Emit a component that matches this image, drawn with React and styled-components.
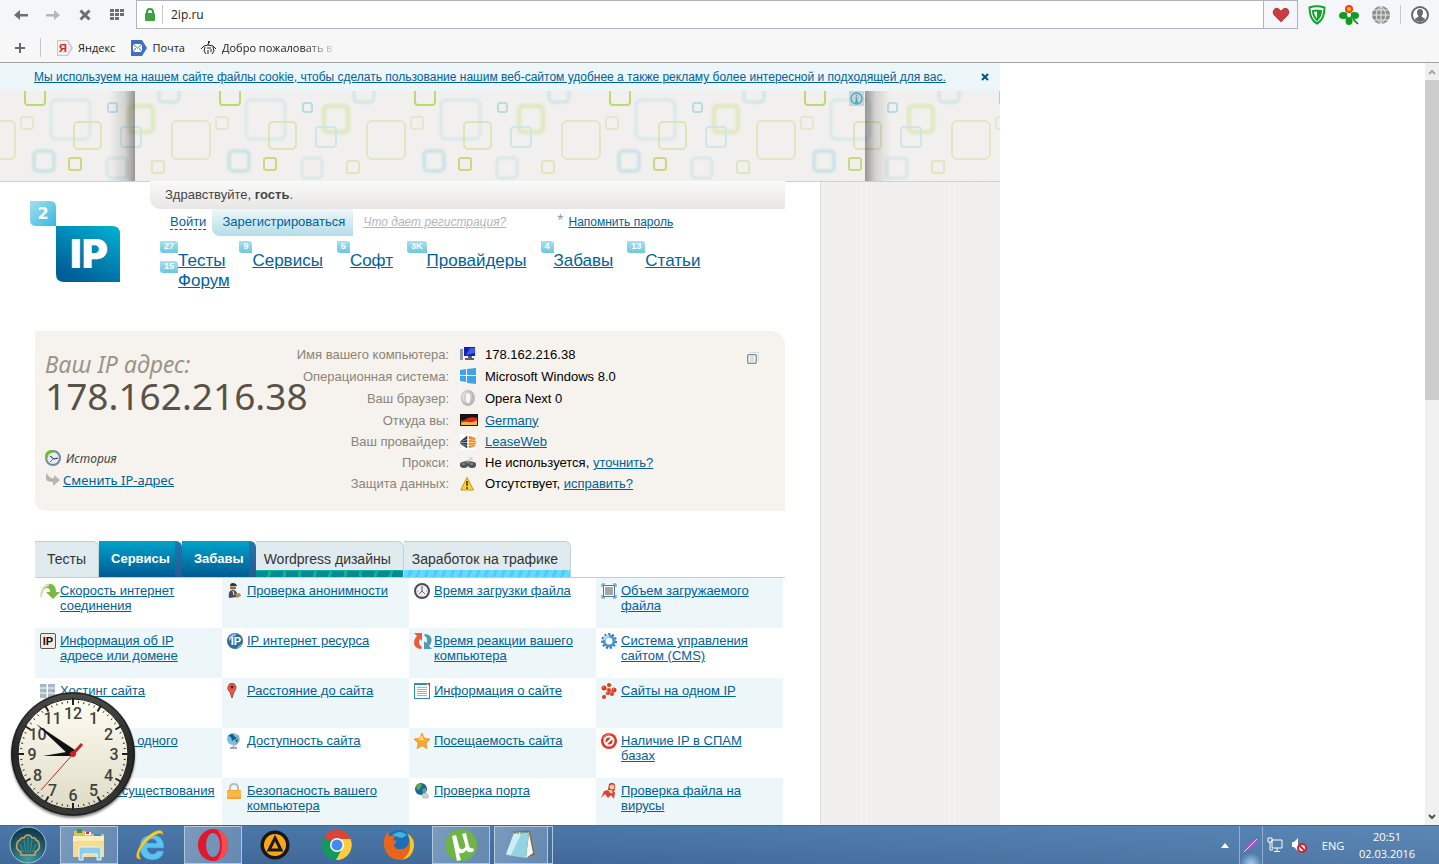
import React from "react";
import styled, { createGlobalStyle, css } from "styled-components";

const Global = createGlobalStyle`
  *, *::before, *::after { box-sizing: border-box; }
  body { margin: 0; font-family: "Liberation Sans", Arial, sans-serif; font-size: 13px; color: #000; background: #fff; }
  button, input { font: inherit; color: inherit; border: 0; padding: 0; margin: 0; background: none; }
  svg { display: block; flex: none; }
`;

const uiFont = `"Open Sans", "Noto Sans", sans-serif`;
const humanist = `"Noto Sans", "Open Sans", sans-serif`;

/* ---------- window ---------- */
const Window = styled.div`
  display: flex;
  flex-direction: column;
  height: 100vh;
  overflow: hidden;
`;
const Toolbar = styled.div`
  display: flex;
  height: 33px;
  align-items: flex-start;
  background: #f4f6f9;
  font-family: ${uiFont};
`;
const ToolGroup = styled.div`
  display: flex;
  align-items: center;
  height: 29px;
  gap: ${(p) => p.$gap || 16}px;
  padding: 0 ${(p) => p.$right || 0}px 0 ${(p) => p.$left || 0}px;
`;
const IconButton = styled.button`
  display: flex;
  align-items: center;
  justify-content: center;
  width: 16px;
  height: 20px;
`;
const AddressBox = styled.div`
  display: flex;
  flex: 1;
  align-items: center;
  height: 29px;
  background: #fff;
  border: 1px solid #b0b3b7;
  padding-left: 7px;
`;
const Rule = styled.span`
  width: 1px;
  height: 19px;
  background: #c6c8ca;
`;
const AddressInput = styled.input`
  flex: 1;
  min-width: 0;
  padding: 0 8px;
  font-size: 12px;
  color: #222;
  outline: none;
`;
const HeartButton = styled.button`
  display: flex;
  align-items: center;
  justify-content: center;
  width: 34px;
  height: 27px;
  border-left: 1px solid #b0b3b7;
  background: #f4f6f9;
`;
const Bookmarks = styled.nav`
  display: flex;
  align-items: center;
  height: 30px;
  padding-left: 12px;
  gap: 16px;
  background: #f7f7f7;
  border-bottom: 1px solid #a2a2a2;
  font-family: ${uiFont};
  font-size: 11px;
`;
const Bookmark = styled.a`
  display: flex;
  align-items: center;
  gap: 5px;
  color: #222;
  text-decoration: none;
  white-space: nowrap;
`;
const Faded = styled.span`
  width: 116px;
  overflow: hidden;
  mask-image: linear-gradient(90deg, #000 70%, transparent);
`;

/* ---------- viewport ---------- */
const Viewport = styled.div`
  position: relative;
  display: flex;
  flex: 1;
  min-height: 0;
  background: #fff;
`;
const Scroller = styled.div`
  flex: 1;
  min-width: 0;
  overflow: hidden;
`;
const ScrollTrack = styled.div`
  display: flex;
  flex-direction: column;
  align-items: center;
  width: 14px;
  background: #f0f0f0;
`;
const ScrollArrow = styled.button`
  display: flex;
  align-items: center;
  justify-content: center;
  width: 14px;
  height: 17px;
`;
const ScrollThumb = styled.div`
  width: 14px;
  height: 42%;
  background: #cdcdcd;
`;
const ScrollRest = styled.div`
  flex: 1;
`;
const Site = styled.div`
  width: 100%;
  max-width: 1000px;
`;
const link = css`
  color: #00629b;
  text-decoration: underline;
`;
const Link = styled.a`
  ${link}
`;
const CookieBar = styled.div`
  display: flex;
  align-items: center;
  justify-content: space-between;
  height: 28px;
  padding: 0 7px 0 34px;
  background: #ecf6f8;
  font-size: 12px;
`;
const Banner = styled.div`
  display: flex;
  height: 91px;
  position: relative;
  background: #f2f0ee;
  border-bottom: 1px solid #d0d0d0;
`;
const BannerFrame = styled.div`
  position: absolute;
  top: 0;
  bottom: 0;
  left: 50%;
  width: 73%;
  transform: translateX(-50%);
  display: flex;
  justify-content: flex-end;
  &::before, &::after {
    content: "";
    position: absolute;
    top: 0;
    bottom: 0;
    width: 26px;
  }
  &::before { right: 100%; background: linear-gradient(270deg, rgba(0,0,0,.38), rgba(0,0,0,.12) 40%, transparent); }
  &::after { left: 100%; background: linear-gradient(90deg, rgba(0,0,0,.38), rgba(0,0,0,.12) 40%, transparent); }
`;
const AdInfo = styled.button`
  width: 15px;
  height: 15px;
  margin-right: 1px;
  background: #cfd2d2;
`;
const Columns = styled.div`
  display: flex;
`;
const Main = styled.main`
  flex: 1;
  padding: 0 35px;
`;
const Side = styled.aside`
  width: 180px;
  border-left: 1px solid #e0deda;
  background: repeating-linear-gradient(90deg, #f2f0ee 0 4px, #f0eeec 4px 5px, #f2f0ee 5px 9px, #f1efed 9px 11px);
`;

/* ---------- header ---------- */
const Header = styled.header`
  display: flex;
  height: 149px;
  margin-left: -5px;
`;
const Logo = styled.a`
  display: block;
  width: 90px;
  margin: 19px 30px 0 0;
`;
const HeaderBody = styled.div`
  flex: 1;
  min-width: 0;
`;
const Greeting = styled.div`
  height: 28px;
  margin-top: -1px;
  padding-left: 15px;
  line-height: 28px;
  position: relative;
  color: #444;
  border-bottom-left-radius: 10px;
  background: linear-gradient(#fafafa, #e7e6e5);
`;
const Account = styled.div`
  display: flex;
  height: 27px;
  align-items: center;
  padding: 0 0 2px 20px;
  font-size: 12px;
  white-space: nowrap;
`;
const LoginButton = styled.button`
  height: 17px;
  margin-right: 6px;
  font-size: 13px;
  color: #00629b;
  border-bottom: 1px dashed #00629b;
`;
const RegisterButton = styled.button`
  align-self: flex-start;
  height: 27px;
  padding: 0 8px 2px 10px;
  margin-right: 10px;
  font-size: 13px;
  color: #00629b;
  border-bottom-left-radius: 8px;
  background: linear-gradient(#edf7f8, #b4dde7);
`;
const Hint = styled.a`
  color: #b5b5b5;
  font-style: italic;
  margin-right: 51px;
`;
const Star = styled.sup`
  color: #999;
  font-size: 16px;
  line-height: 12px;
  padding-bottom: 2px;
  margin-right: 5px;
`;
const Menu = styled.nav`
  display: flex;
  flex-wrap: wrap;
  width: 570px;
  padding: 5px 0 0 10px;
  column-gap: 14px;
`;
const MenuItem = styled.div`
  display: flex;
  align-items: flex-start;
  height: 20px;
`;
const Count = styled.span`
  height: 12px;
  padding: 0 4px;
  font-size: 9px;
  font-weight: bold;
  line-height: 11px;
  color: #fff;
  border-radius: 0 3px 0 3px;
  background: linear-gradient(#a9e0ee, #6cc7e2);
`;
const MenuLink = styled.a`
  ${link}
  font-size: 17px;
  line-height: 20px;
  margin-top: 10px;
`;

/* ---------- address panel ---------- */
const IpPanel = styled.section`
  display: flex;
  height: 180px;
  background: #f6f3ee;
  border-radius: 0 14px 0 10px;
`;
const IpSummary = styled.div`
  width: 250px;
  padding: 20px 0 0 10px;
  font-family: ${humanist};
  white-space: nowrap;
`;
const IpTitle = styled.h1`
  margin: 0;
  font-size: 23px;
  line-height: 26px;
  font-style: italic;
  font-weight: 400;
  color: #9b9488;
`;
const IpValue = styled.p`
  margin: 0 0 32px;
  font-size: 37px;
  line-height: 38px;
  color: #5a5147;
`;
const IpAction = styled.div`
  display: flex;
  align-items: center;
  gap: ${(p) => p.$gap}px;
  height: 22px;
  font-size: ${(p) => p.$size}px;
  color: #444;
`;
const Facts = styled.table`
  align-self: flex-start;
  margin-top: 12px;
  border-collapse: collapse;
  th, td { padding: 0; white-space: nowrap; }
  th { width: 164px; text-align: right; font-weight: 400; color: #8b8378; }
  td svg { margin: 0 7px 0 11px; }
`;
const FactRow = styled.tr`
  height: ${(p) => (p.$compact ? 21 : 22)}px;
`;
const CopyButton = styled.button`
  width: 12px;
  height: 12px;
  margin: 21px 26px 0 auto;
`;

/* ---------- tabs and tools ---------- */
const Tabs = styled.div`
  display: flex;
  height: 37px;
  margin-top: 30px;
  border-bottom: 1px solid #bfcfd5;
`;
const Tab = styled.button`
  height: 36px;
  padding: 0 12px 2px ${(p) => (p.$strip ? 8 : 12)}px;
  font-size: 14px;
  white-space: nowrap;
  color: #333;
  border-top: 1px solid #bfcfd5;
  border-right: 1px solid #c3d1d6;
  border-top-right-radius: 6px;
  background: #e0ebef;
  ${(p) => p.$active && css`
    color: #fff;
    font-size: 13px;
    font-weight: bold;
    border-right: 0;
    border-top: 0;
    background: linear-gradient(90deg, transparent calc(100% - 7px), rgba(60,90,150,.6) calc(100% - 7px)), linear-gradient(#00a3cb, #005a92);
  `}
  ${(p) => p.$strip === "teal" && css`
    background: repeating-linear-gradient(100deg, #078a94 0 12px, #0fb09c 12px 15px) bottom / 100% 6px no-repeat, linear-gradient(#0fb09c, #0fb09c) bottom / 100% 7px no-repeat, #e0ebef;
  `}
  ${(p) => p.$strip === "sky" && css`
    background: repeating-linear-gradient(110deg, #5fdcff 0 5px, #58c6ff 5px 8px) bottom / 100% 7px no-repeat, #e0ebef;
  `}
`;
const Tools = styled.div`
  display: grid;
  grid-template-columns: repeat(4, 1fr);
  margin-right: 2px;
`;
const Tool = styled.div`
  display: flex;
  height: 50px;
  padding: 5px 6px 0 5px;
  line-height: 15px;
  background: ${(p) => (p.$tint ? "#edf6f8" : "#fff")};
`;
const ToolIcon = styled.span`
  flex: none;
  width: 20px;
`;
const ClockHolder = styled.div`
  position: absolute;
  left: 8px;
  bottom: 3px;
`;

/* ---------- taskbar ---------- */
const Taskbar = styled.footer`
  display: flex;
  height: 39px;
  justify-content: space-between;
  background: linear-gradient(90deg, rgba(255,255,255,0) 40%, rgba(150,190,225,.22)), linear-gradient(#4a78a8, #41699a);
  border-top: 1px solid #3e6893;
  font-family: ${uiFont};
  color: #fff;
`;
const Apps = styled.div`
  display: flex;
  align-items: stretch;
`;
const AppButton = styled.button`
  display: flex;
  align-items: center;
  justify-content: center;
  width: ${(p) => p.$w || 58}px;
  margin-right: 4px;
  border: 1px solid ${(p) => (p.$open ? "#b3c6da" : "transparent")};
  background: ${(p) => (p.$open ? "linear-gradient(110deg, #7a9bbd, #6588b0)" : "none")};
`;
const StackEdge = styled.span`
  width: 5px;
  margin-left: -4px;
  border: 1px solid #b3c6da;
  border-left: 0;
`;
const Tray = styled.div`
  display: flex;
  align-items: center;
  font-size: 11px;
`;
const TrayButton = styled.button`
  display: flex;
  align-items: center;
  justify-content: center;
  width: ${(p) => p.$w || 24}px;
  height: 38px;
`;
const FeatherButton = styled(TrayButton)`
  border-left: 1px solid #8fb0d0;
  border-right: 1px solid #8fb0d0;
  background: radial-gradient(circle at 50% 100%, #a8d0f2, transparent 28%);
`;
const DateTime = styled.time`
  width: 64px;
  margin-right: 20px;
  text-align: center;
  line-height: 17px;
`;

/* ---------- drawings ---------- */
const I = ({ w = 16, h = 16, vb, children }) => (
  <svg width={w} height={h} viewBox={vb || `0 0 ${w} ${h}`} fill="none" aria-hidden="true">{children}</svg>
);

const tiles = [
  [25, -6, 20, 20, 3, "#c1d86e", 2, 0],
  [51, 9, 39, 39, 5, "#d5e7ea", 3, 1],
  [74, 31, 27, 27, 4, "#dae5b8", 2, 0],
  [108, 12, 9, 9, 2, "#b9dce3", 2, 0],
  [129, 15, 24, 26, 4, "#e0e9c3", 5, 1],
  [121, 36, 20, 20, 3, "#d0e5e8", 2, 0],
  [159, -8, 20, 19, 4, "#cfe4e7", 3, 1],
  [172, 30, 38, 38, 5, "#dfe8c0", 2, 0],
  [-23, 30, 38, 38, 5, "#dfe8c0", 2, 0],
  [21, 26, 12, 12, 2, "#e2e9c8", 2, 0],
  [34, 60, 20, 20, 4, "#cde3e7", 4, 1],
  [69, 67, 12, 12, 2, "#c8da80", 2, 0],
  [107, 67, 20, 20, 4, "#d6e6e9", 3, 1],
  [152, 70, 12, 12, 2, "#dde7bb", 2, 0],
];
const Squares = () => (
  <svg width="100%" height="90" aria-hidden="true">
    <defs>
      <filter id="soft" x="-20%" y="-20%" width="140%" height="140%" colorInterpolationFilters="sRGB"><feGaussianBlur stdDeviation=".8" /></filter>
      <pattern id="squares" width="195" height="90" patternUnits="userSpaceOnUse">
        {tiles.map(([x, y, w, h, r, c, s, b], i) => (
          <rect key={i} x={x} y={y} width={w} height={h} rx={r} fill="none" stroke={c} strokeWidth={s} filter={b ? "url(#soft)" : undefined} />
        ))}
      </pattern>
    </defs>
    <rect width="100%" height="90" fill="url(#squares)" />
  </svg>
);

const LogoArt = () => (
  <svg width="90" height="81" viewBox="0 0 90 81" role="img" aria-label="2IP">
    <defs>
      <linearGradient id="lg1" x1="0" y1="0" x2="1" y2="1"><stop stopColor="#a4e0ee" /><stop offset="1" stopColor="#37b6de" /></linearGradient>
      <linearGradient id="lg2" x1="1" y1="0" x2=".4" y2="1"><stop stopColor="#00b2d4" /><stop offset="1" stopColor="#005f98" /></linearGradient>
    </defs>
    <path d="M0 0h20q6 0 6 6v19H6q-6 0-6-6z" fill="url(#lg1)" />
    <path d="M26 25h56q8 0 8 8v48H34q-8 0-8-8z" fill="url(#lg2)" />
    <text x="13" y="18" textAnchor="middle" fontFamily="DejaVu Sans" fontWeight="bold" fontSize="16" fill="#fff">2</text>
    <text x="59" y="67" textAnchor="middle" fontFamily="Inter, Liberation Sans, sans-serif" fontWeight="900" fontSize="40" fill="#fff">IP</text>
  </svg>
);

const Clock = () => {
  const nums = [[12, 0], [1, 30], [2, 60], [3, 90], [4, 120], [5, 150], [6, 180], [7, 210], [8, 240], [9, 270], [10, 300], [11, 330]];
  const pos = (deg, r) => [65 + r * Math.sin((deg * Math.PI) / 180), 64 - r * Math.cos((deg * Math.PI) / 180)];
  return (
    <svg width="130" height="132" viewBox="0 0 130 132" role="img" aria-label="20:51">
      <defs>
        <linearGradient id="face" x1="0" y1="0" x2="0" y2="1"><stop stopColor="#fffdf2" /><stop offset="1" stopColor="#dedbc6" /></linearGradient>
        <linearGradient id="ring" x1="0" y1="0" x2="0" y2="1"><stop stopColor="#4c4c4a" /><stop offset=".5" stopColor="#262625" /><stop offset="1" stopColor="#3a3a39" /></linearGradient>
        <filter id="shade" x="-10%" y="-10%" width="120%" height="120%"><feGaussianBlur stdDeviation="1" /></filter>
      </defs>
      <circle cx="65" cy="66" r="62" fill="#000" opacity=".45" filter="url(#shade)" />
      <circle cx="65" cy="64" r="62" fill="url(#ring)" />
      <circle cx="65" cy="64" r="61" stroke="#1a1a1a" strokeWidth="1" fill="none" />
      <circle cx="65" cy="64" r="55" fill="url(#face)" stroke="#1b1b1a" strokeWidth="1" />
      {Array.from({ length: 60 }, (_, i) => {
        const major = i % 5 === 0;
        const [x1, y1] = pos(i * 6, major ? 49 : 51);
        const [x2, y2] = pos(i * 6, major ? 56 : 53);
        return <line key={i} x1={x1} y1={y1} x2={x2} y2={y2} stroke="#222" strokeWidth={major ? 2 : 1} />;
      })}
      {nums.map(([n, d]) => {
        const [x, y] = pos(d, 41);
        return <text key={n} x={x} y={y + 6} textAnchor="middle" fontFamily="Roboto, Liberation Sans, sans-serif" fontWeight="500" fontSize="16" fill="#40403c">{n}</text>;
      })}
      <path d="M28 34L67 60l-5 6z" fill="#111" />
      <path d="M35 66l29-5 3 5z" fill="#111" />
      <path d="M33 100L74 54" stroke="#c2272d" strokeWidth="1" />
      <path d="M64 65L74 54" stroke="#c2272d" strokeWidth="3" />
      <circle cx="65" cy="64" r="3" fill="#c2272d" />
    </svg>
  );
};

const art = {
  speed: <I w={20}><path d="M1 15C0 5 6 0 11 1c4 1 5 4 5 8h4l-7 7-7-7h4c0-3-1-4-3-4-3 0-5 4-6 10z" fill="#7db843" /><path d="M1 14C1 6 5 2 9 2" stroke="#cfe8b4" strokeWidth="2" /></I>,
  spy: <I><circle cx="6" cy="4" r="3" fill="#e2b48e" /><path d="M3 3q0-3 3-3t4 3z" fill="#333" /><path d="M2 15c-1-6 1-8 4-8s5 3 4 7z" fill="#4a4f58" /><path d="M6 8l1 4" stroke="#fff" /><path d="M8 11l5-1 1 3-4 2z" fill="#b98d55" /><path d="M3 5h6" stroke="#222" /></I>,
  timer: <I><circle cx="8" cy="8" r="7" fill="#eef1f3" stroke="#4b4f53" strokeWidth="2" /><path d="M8 3v5" stroke="#555" /><path d="M5 11l3-3 3 3" stroke="#d33" /><path d="M3 8h1M12 8h1M8 13v1" stroke="#888" /></I>,
  volume: <I><path d="M1 4V1h3M12 1h3v3M15 12v3h-3M4 15H1v-3" stroke="#4f86ad" /><rect x="2.500" y="2.500" width="11" height="11" fill="#fff" stroke="#4679a2" /><rect x="4" y="4" width="8" height="8" fill="#a4a6a8" /></I>,
  ip: <I><rect x=".5" y=".5" width="15" height="15" rx="1.5" fill="#f8e9e1" stroke="#555" /><text x="8" y="12" textAnchor="middle" fontFamily="Liberation Sans" fontWeight="bold" fontSize="11" fill="#111">IP</text></I>,
  ipGlobe: <I><circle cx="8" cy="8" r="8" fill="#2f6f9c" /><path d="M2 4q4-4 8-3L6 4 2 8zM12 13l3-2q-2 4-5 4z" fill="#9cc7dc" /><text x="9" y="12" textAnchor="middle" fontFamily="Liberation Sans" fontWeight="bold" fontSize="11" fill="#fff">IP</text></I>,
  react: <I w={18}><path d="M0 0h8v8L6 6q-3 4 2 8l-1 2C-2 15-1 7 3 3z" fill="#ee5a3a" /><path d="M18 16h-8V8l2 2q3-4-2-8l1-1c9 1 7 9 4 12z" fill="#4f9bb8" /></I>,
  gear: <I><circle cx="8" cy="8" r="5" stroke="#4a94d8" strokeWidth="3" /><circle cx="8" cy="8" r="7" stroke="#2d79c4" strokeWidth="2" strokeDasharray="2 2" /><path d="M3 7q1-4 5-4" stroke="#c2e2fa" strokeWidth="2" /></I>,
  server: <I><path d="M0 1h7v14H0zM8 1h7v14H8z" fill="#a5b8c4" /><path d="M0 5h16M0 10h16M7 1v14" stroke="#fff" /><path d="M5 8h1M13 8h1" stroke="#3a9a44" /></I>,
  pin: <I w={10} h={16}><path d="M5 15L3 9Q0 7 1 4 2 0 5 0t4 4q0 3-2 5z" fill="#e8594e" stroke="#b5443c" /><circle cx="5" cy="4" r="1.5" fill="#6d1613" /></I>,
  doc: <I><rect x=".5" y=".5" width="15" height="15" fill="#fff" stroke="#2c8fb5" /><path d="M3 4.500h10M3 6.500h10M3 8.500h10M3 10.500h10M3 12.500h10" stroke="#b0b0b0" /><path d="M0 1h13" stroke="#2c8fb5" strokeWidth="2" /><path d="M14 0h2v2h-2z" fill="#e33" /></I>,
  sites: <I><path d="M3 14l3-4 3-1 5-2M3 5l5 2M7 3l4-1" stroke="#b98752" /><g fill="#dc3d22"><circle cx="3" cy="14" r="2" /><circle cx="7" cy="10" r="2" /><circle cx="3" cy="5" r="2.500" /><circle cx="8" cy="7" r="2" /><circle cx="13" cy="7" r="2.500" /><circle cx="8" cy="2" r="2" /><circle cx="11" cy="11" r="2" /></g><path d="M2 4h1M8 5h1M12 6h1M6 9h1" stroke="#ffb19a" /></I>,
  globeStand: <I w={13} h={16}><circle cx="6" cy="6" r="6" fill="#79c0e0" /><path d="M1 3q5-4 6 0l3 2-5 3-1-4zM8 7l3-1-1 4z" fill="#175f8b" /><path d="M11 2q4 8-5 11v1" stroke="#8c999f" /><path d="M3 15h7" stroke="#9ca6ab" strokeWidth="2" /></I>,
  star: <I><path d="M8 0l2.500 5.300 5.500.7-4 4 1 5.700-5-2.900-5 2.900 1-5.700-4-4 5.500-.7z" fill="#fba82c" stroke="#e17f18" strokeWidth=".6" /><path d="M8 2l2 5H4z" fill="#ffd873" /></I>,
  ban: <I><circle cx="8" cy="8" r="8" fill="#dd3425" /><circle cx="8" cy="8" r="4.500" stroke="#fff" strokeWidth="2" /><path d="M5 11l6-6" stroke="#fff" strokeWidth="2" /><path d="M2 6q2-5 8-5" stroke="#ff8f7c" /></I>,
  lock: <I w={14} h={16}><path d="M3 8V5q0-4 4-4t4 4v3" stroke="#b9bdc0" strokeWidth="2" /><rect x="0" y="7" width="14" height="9" rx="1" fill="#f6a42a" /><path d="M0 9h14M0 11h14M0 13h14" stroke="#ffc866" /></I>,
  globeMouse: <I><circle cx="7" cy="6" r="6" fill="#1c62a8" /><path d="M2 3q4-4 6-1l-2 4-3 1zM8 6l4-1v4l-3 1z" fill="#57ae45" /><path d="M8 12q1-3 4-2t2 5H9z" fill="#c6d5de" stroke="#8899a4" strokeWidth=".5" /></I>,
  virus: <I><path d="M0 15l3-7 4-1 3 2 4 0-1 7-3-4-3 3-3-4z" fill="#e1432f" /><path d="M8 1q4-3 6 1 1 4-2 8L7 7z" fill="#c63b29" /><circle cx="11" cy="4" r="2.500" fill="#f7c6a5" /><path d="M7 7l4 0 1 3-3 0z" fill="#f7c6a5" /></I>,
};

const Pc = () => <I><path d="M0 3h3v11H0z" fill="#8d99a5" /><path d="M4 1h12v9H4z" fill="#dde3e8" /><path d="M4 1h11v9H4z" fill="#1020b8" /><path d="M6 9l4-7h5v5z" fill="#3f5bea" /><path d="M8 10h4v2H8zM5 12h9v2H5z" fill="#59636d" /></I>;
const Win = () => <I><path d="M0 2l6-1v6H0zM7 1l9-1v7H7zM0 8h6v6l-6-1zM7 8h9v8l-9-1z" fill="#3fa3e8" /></I>;
const OperaGrey = () => <I><ellipse cx="8" cy="8" rx="7" ry="8" fill="#b9bbbb" /><ellipse cx="7" cy="7" rx="5" ry="6" fill="#dededd" /><ellipse cx="8" cy="8" rx="3" ry="6" fill="#f9f7f3" stroke="#999" strokeWidth=".6" /></I>;
const Flag = () => <I w={18} h={12}><path d="M0 0h18v12H0z" fill="#d52b1e" /><path d="M0 0h18v4Q10 2 6 5T0 5z" fill="#181212" /><path d="M0 9q4-2 8-1t10-2v6H0z" fill="#f2b632" /><path d="M.5.5h17v11H.5z" stroke="#111" /></I>;
const Lease = () => <I><path d="M0 0h16v16H0z" fill="#fff" /><path d="M7 2v3L1 7zM7 6v2H0zM7 9v2L0 9zM7 12v2l-6-4z" fill="#27344f" stroke="#27344f" strokeWidth=".5" /><path d="M9 2l6 2v2L9 5zM9 6l7 1v1H9zM9 9h7v1l-7 1zM9 12l6-1v1l-6 2z" fill="#f68b1f" stroke="#f68b1f" strokeWidth=".5" /></I>;
const Glasses = () => <I><path d="M0 8q8-5 16 0v3H0z" fill="#83898b" /><ellipse cx="4" cy="10" rx="4" ry="3" fill="#4c5557" /><ellipse cx="12" cy="10" rx="4" ry="3" fill="#4c5557" /><path d="M10 1l1 2 2-1-1 2 2 1H9" fill="#ccd2d3" /><path d="M2 9h3M10 9h3" stroke="#a7b2b5" /></I>;
const Warn = () => <I><path d="M7 1.500L13.500 14H.8z" fill="#ffd22e" stroke="#c69214" strokeLinejoin="round" /><path d="M7 5v5M7 11v2" stroke="#333" strokeWidth="1.500" /></I>;

const facts = [
  ["Имя вашего компьютера:", <Pc />, "178.162.216.38"],
  ["Операционная система:", <Win />, "Microsoft Windows 8.0"],
  ["Ваш браузер:", <OperaGrey />, "Opera Next 0"],
  ["Откуда вы:", <Flag />, <Link href="#geo">Germany</Link>],
  ["Ваш провайдер:", <Lease />, <Link href="#isp">LeaseWeb</Link>],
  ["Прокси:", <Glasses />, <>Не используется, <Link href="#proxy">уточнить?</Link></>],
  ["Защита данных:", <Warn />, <>Отсутствует, <Link href="#privacy">исправить?</Link></>],
];

const menu = [["27", "Тесты"], ["9", "Сервисы"], ["5", "Софт"], ["3K", "Провайдеры"], ["4", "Забавы"], ["13", "Статьи"], ["15", "Форум"]];

const tools = [
  ["speed", "Скорость интернет соединения"], ["spy", "Проверка анонимности"], ["timer", "Время загрузки файла"], ["volume", "Объем загружаемого файла"],
  ["ip", "Информация об IP адресе или домене"], ["ipGlobe", "IP интернет ресурса"], ["react", "Время реакции вашего компьютера"], ["gear", "Система управления сайтом (CMS)"],
  ["server", "Хостинг сайта"], ["pin", "Расстояние до сайта"], ["doc", "Информация о сайте"], ["sites", "Сайты на одном IP"],
  ["server", "Все домены одного владельца"], ["globeStand", "Доступность сайта"], ["star", "Посещаемость сайта"], ["ban", "Наличие IP в СПАМ базах"],
  ["doc", "Проверка существования email"], ["lock", "Безопасность вашего компьютера"], ["globeMouse", "Проверка порта"], ["virus", "Проверка файла на вирусы"],
];

const Arrow = ({ c, flip }) => <I w={14} h={12}><path d={flip ? "M0 5h8V1l6 5-6 5V7.500H0z" : "M14 5H6V1L0 6l6 5V7.500h8z"} fill={c} /></I>;

const StartArt = () => (
  <I w={38} h={38}>
    <defs><radialGradient id="orb" cx=".5" cy=".9" r=".8"><stop stopColor="#3d9aa3" /><stop offset="1" stopColor="#123c50" /></radialGradient></defs>
    <circle cx="19" cy="19" r="18" fill="url(#orb)" stroke="#a7c4cf" strokeWidth="1" />
    <path d="M12 29v-3Q6 23 8 18q0-3 3-4 1-3 4-2 1-3 4-3t4 3q3-1 4 2 3 1 3 4 2 5-4 8v3z" fill="#1f6470" stroke="#d2a458" strokeWidth="1.500" />
    <path d="M15 27l-4-9M17 27l-2-13M19 27V11M21 27l2-13M23 27l4-9" stroke="#3f8f99" />
  </I>
);
const ExplorerArt = () => (
  <I w={34} h={34}>
    <path d="M2 3h12l1 3h17v20H2z" fill="#e3bd60" /><path d="M5 1h5v4H5z" fill="#2f9d3a" /><path d="M13 4h6v3h-6z" fill="#fff" /><path d="M14 4h3v2h-3z" fill="#d33" /><path d="M22 6h7v3h-7z" fill="#3c8ad0" />
    <path d="M1 8h31v21H1z" fill="#f6dc8e" /><path d="M1 8h31v5H1z" fill="#fbedb8" />
    <path d="M7 32V21q0-2 2-2h18q2 0 2 2v11h-4v-6H11v6z" fill="#8fcdf0" stroke="#e6f6ff" />
  </I>
);
const IeArt = () => (
  <I w={30} h={32}>
    <path fillRule="evenodd" d="M28 19H11q1 6 6 6 3 0 4-3h7q-2 9-12 9Q4 30 4 18T16 6q12 0 12 13zM11 14h10q-1-4-5-4t-5 4z" fill="#5bc3f3" stroke="#2f8fcd" strokeWidth=".6" />
    <path d="M5 30Q-2 31 2 21 7 9 18 3q9-4 9 3-1-3-6-1Q11 10 5 20q-4 7 0 10z" fill="#f7cb31" stroke="#d9a31d" strokeWidth=".5" />
  </I>
);
const OperaArt = () => (
  <I w={32} h={34}>
    <ellipse cx="16" cy="17" rx="15" ry="16" fill="#e2162c" /><path d="M20 2q11 3 11 15T20 32q5-5 5-15T20 2z" fill="#f94a4e" /><ellipse cx="16" cy="17" rx="7" ry="12" fill="#7394b9" />
  </I>
);
const AimpArt = () => (
  <I w={30} h={30}><circle cx="15" cy="15" r="14.500" fill="#181818" /><circle cx="15" cy="15" r="11" fill="#fba51a" /><path d="M15 8l6 12H9z" stroke="#1b1b1b" strokeWidth="3" fill="#fba51a" /></I>
);
const ChromeArt = () => (
  <I w={30} h={32}>
    <path d="M15 16L2 8.500A15 15 0 0 1 28.500 9L28 10H15z" fill="#dc4437" /><path d="M15 16L2 8.500A15 15 0 0 0 14 31l6-11z" fill="#119b58" /><path d="M15 10h13.500A15 15 0 0 1 14 31l7-13z" fill="#fdce3c" />
    <circle cx="15" cy="16" r="7" fill="#fff" /><circle cx="15" cy="16" r="5.500" fill="#4689f1" />
  </I>
);
const FirefoxArt = () => (
  <I w={32} h={34}>
    <circle cx="16" cy="15" r="13" fill="#1b6fb5" /><path d="M9 7q8-6 15 0l-5 3-4-1z" fill="#3fb4e6" />
    <path d="M1 17Q0 9 5 4l1 4q3-1 6 0l-2 4 4 1-3 4q1 5 7 4 6 0 8-6 2-4 0-9 6 5 5 12-2 13-14 14Q3 31 1 17z" fill="#e8661b" />
    <path d="M24 5q8 6 7 14-2 11-12 13 8-6 8-14 0-8-3-13z" fill="#fbc52d" />
  </I>
);
const TorrentArt = () => (
  <I w={34} h={34}>
    <circle cx="17" cy="17" r="16" fill="#6fb445" /><path d="M8 8l4-1 3 11q1 4 4 3 3-1 2-5L18 6l4-1 3 13q1 3 4 2l1 3q-5 3-8-1-2 4-7 3l2 7-4 1z" fill="#fff" />
  </I>
);
const NotepadArt = () => (
  <I w={32} h={32}>
    <path d="M9 3l16-1 5 24-7 2z" fill="#8b6d3a" /><path d="M24 4l4 20-7 5z" fill="#f3f6f7" /><path d="M9 4l15-1-3 26-20-3z" fill="#93d3e2" /><path d="M9 4l8-1L6 26l-5-1z" fill="#cdeef3" /><path d="M10 2v3M13 2v3M16 2v3M19 1v3M22 1v3" stroke="#666" />
  </I>
);

const apps = [
  ["Проводник", ExplorerArt, 1], ["Internet Explorer", IeArt, 0], ["Opera", OperaArt, 1], ["AIMP", AimpArt, 0],
  ["Chrome", ChromeArt, 0], ["Firefox", FirefoxArt, 0], ["uTorrent", TorrentArt, 1],
];

export default function App() {
  return (
    <Window>
      <Global />
      <Toolbar>
        <ToolGroup $left={13} $right={11}>
          <IconButton aria-label="Назад"><Arrow c="#6b6e72" /></IconButton>
          <IconButton aria-label="Вперёд"><Arrow c="#b4b6b8" flip /></IconButton>
          <IconButton aria-label="Стоп"><I w={12} h={12}><path d="M1.500 1.500l9 9M10.500 1.500l-9 9" stroke="#6b6e72" strokeWidth="3" /></I></IconButton>
          <IconButton aria-label="Экспресс-панель"><I w={14} h={12}><path d="M0 1.500h14M0 5.500h14M0 9.500h9" stroke="#6b6e72" strokeWidth="3" strokeDasharray="4 1" /></I></IconButton>
        </ToolGroup>
        <AddressBox>
          <I w={12} h={14}><path d="M3 6V4q0-3 3-3t3 3v2" stroke="#3b9c3e" strokeWidth="2" /><rect x="1" y="5" width="10" height="8" rx="1" fill="#3ea341" /></I>
          <ToolGroup $left={6}><Rule /></ToolGroup>
          <AddressInput aria-label="Адрес" defaultValue="2ip.ru" />
          <HeartButton aria-label="В закладки"><I w={18} h={16}><path d="M9 15L2 8Q0 5 2 2.500T7 2l2 2 2-2q3-2 5 .5T16 8z" fill="#cc3c3f" stroke="#a33034" strokeWidth=".6" /></I></HeartButton>
        </AddressBox>
        <ToolGroup $left={11} $right={11}>
          <IconButton aria-label="Защита"><I w={18} h={20}><path d="M1.500 2.500q7-2.500 15 0 0 12-7.500 16Q1.500 14.500 1.500 2.500z" fill="#fff" stroke="#12a32b" strokeWidth="2" /><path d="M5 6q4-1 8 0 0 5-4 9-4-4-4-9z" stroke="#12a32b" strokeWidth="2" /><path d="M9 6v8q3-3 4-8z" fill="#12a32b" /></I></IconButton>
          <IconButton aria-label="ICQ"><I w={20} h={20}><g fill="#0ca01a"><ellipse cx="4.500" cy="10.500" rx="4.500" ry="3.500" /><ellipse cx="15.500" cy="10.500" rx="4.500" ry="3.500" /><ellipse cx="10" cy="16" rx="3.500" ry="4" /></g><path d="M14 14l5 5" stroke="#0a6d12" strokeWidth="1.500" /><circle cx="10" cy="4" r="4" fill="#ff3a1c" /><circle cx="10" cy="4" r="2" fill="#ffc21d" /><circle cx="10" cy="10" r="2" fill="#f4f6f9" /></I></IconButton>
          <IconButton aria-label="Сеть"><I w={20} h={20}><circle cx="10" cy="10" r="9" fill="#8b8d8f" /><path d="M10 1v18M1 10h18M3 5h14M3 15h14M10 1Q0 10 10 19M10 1q10 9 0 18" stroke="#e9ebed" /></I></IconButton>
        </ToolGroup>
        <ToolGroup $gap={11} $right={11}>
          <Rule />
          <IconButton aria-label="Профиль"><I w={18} h={18}><circle cx="9" cy="9" r="8" fill="#fff" stroke="#66696d" strokeWidth="2" /><path d="M9 3q3 0 3 3.500 0 2-1.500 3.500 0 1 4 3Q12 16 9 16t-5.500-3q4-2 4-3Q6 8.500 6 6.500 6 3 9 3z" fill="#66696d" /></I></IconButton>
        </ToolGroup>
      </Toolbar>
      <Bookmarks>
        <ToolGroup $gap={12}>
          <IconButton aria-label="Добавить"><I w={12} h={12}><path d="M6 1v10M1 6h10" stroke="#66696d" strokeWidth="2" /></I></IconButton>
          <Rule />
        </ToolGroup>
        <Bookmark href="#ya"><I><path d="M0 0h11l5 8-5 8H0z" fill="#c9c9c9" /><path d="M1 1h9l4 7-4 7H1z" fill="#efefef" /><text x="6" y="12" textAnchor="middle" fontFamily="Liberation Sans" fontWeight="bold" fontSize="11" fill="#e3222a">Я</text></I>Яндекс</Bookmark>
        <Bookmark href="#mail"><I><path d="M0 0h11l5 8-5 8H0z" fill="#3f6fc0" /><path d="M2 4h9v8H2z" fill="#fff" /><path d="M2 4l4.500 4L11 4M2 12l3-4M11 12L8 8" stroke="#4b79c5" /></I>Почта</Bookmark>
        <Bookmark href="#welcome"><I><path d="M8 1l-1 4-4 1-3 3M7 5l5 1 3 3M4 7l-1 4 2 3M12 7l1 4-2 3M6 8h4M7 10v4M10 9v3" stroke="#222" /><circle cx="8" cy="2" r="1" fill="#222" /></I><Faded>Добро пожаловать в</Faded></Bookmark>
      </Bookmarks>

      <Viewport>
        <Scroller>
          <Site>
            <CookieBar>
              <Link href="#cookie">Мы используем на нашем сайте файлы cookie, чтобы сделать пользование нашим веб-сайтом удобнее а также рекламу более интересной и подходящей для вас.</Link>
              <IconButton aria-label="Закрыть"><I w={8} h={8}><path d="M1 1l6 6M7 1L1 7" stroke="#00558a" strokeWidth="2" /></I></IconButton>
            </CookieBar>
            <Banner>
              <Squares />
              <BannerFrame>
                <AdInfo aria-label="О рекламе"><I w={15} h={15}><circle cx="7.500" cy="7.500" r="5.500" stroke="#21b1d2" strokeWidth="1.300" /><path d="M7.500 4v1.500M6.500 7h1v4M6 11h3" stroke="#21b1d2" strokeWidth="1.500" /></I></AdInfo>
              </BannerFrame>
            </Banner>
            <Columns>
              <Main>
                <Header>
                  <Logo href="#home"><LogoArt /></Logo>
                  <HeaderBody>
                    <Greeting>Здравствуйте, <b>гость</b>.</Greeting>
                    <Account>
                      <LoginButton>Войти</LoginButton>
                      <RegisterButton>Зарегистрироваться</RegisterButton>
                      <Hint href="#why">Что дает регистрация?</Hint>
                      <Star>*</Star>
                      <Link href="#remind">Напомнить пароль</Link>
                    </Account>
                    <Menu>
                      {menu.map(([n, t]) => <MenuItem key={t}><Count>{n}</Count><MenuLink href={"#" + n}>{t}</MenuLink></MenuItem>)}
                    </Menu>
                  </HeaderBody>
                </Header>
                <IpPanel>
                  <IpSummary>
                    <IpTitle>Ваш IP адрес:</IpTitle>
                    <IpValue>178.162.216.38</IpValue>
                    <IpAction $gap={5} $size={12}>
                      <I><circle cx="8" cy="8" r="7" fill="#e5edf4" stroke="#7289a5" strokeWidth="2" /><path d="M1 9q0-8 8-8" stroke="#74b83c" strokeWidth="3" /><path d="M5 6l4 3 4-1" stroke="#222" /><path d="M8 9l-3 3" stroke="#d44" /></I>
                      <i>История</i>
                    </IpAction>
                    <IpAction $gap={3} $size={13}>
                      <I w={15} h={14}><path d="M2 0q-4 9 6 9v4l7-6-6-5v3Q4 6 2 0z" fill="#b8b3ab" /></I>
                      <Link href="#change">Сменить IP-адрес</Link>
                    </IpAction>
                  </IpSummary>
                  <Facts>
                    <tbody>
                      {facts.map(([k, icon, v], i) => (
                        <FactRow key={k} $compact={i > 3}><th scope="row">{k}</th><td>{icon}</td><td>{v}</td></FactRow>
                      ))}
                    </tbody>
                  </Facts>
                  <CopyButton aria-label="Копировать"><I w={12} h={12}><path d="M3 .5h8.500V9" stroke="#d5dcdc" /><rect x=".7" y="2.700" width="8.600" height="8.600" rx="1" fill="#f3f3f1" stroke="#7f9094" strokeWidth="1.300" /><path d="M3 5h4M3 7h4M3 9h4" stroke="#c3cccd" /></I></CopyButton>
                </IpPanel>
                <Tabs role="tablist">
                  <Tab role="tab">Тесты</Tab>
                  <Tab role="tab" $active>Сервисы</Tab>
                  <Tab role="tab" $active>Забавы</Tab>
                  <Tab role="tab" $strip="teal">Wordpress дизайны</Tab>
                  <Tab role="tab" $strip="sky">Заработок на трафике</Tab>
                </Tabs>
                <Tools>
                  {tools.map(([icon, text], i) => (
                    <Tool key={text} $tint={(Math.floor(i / 4) + i) % 2 === 1}>
                      <ToolIcon>{art[icon]}</ToolIcon>
                      <span><Link href={"#tool" + i}>{text}</Link></span>
                    </Tool>
                  ))}
                </Tools>
              </Main>
              <Side />
            </Columns>
          </Site>
        </Scroller>
        <ScrollTrack>
          <ScrollArrow aria-label="Вверх"><I w={8} h={6}><path d="M1 5l3-3 3 3" stroke="#a6a6a6" strokeWidth="2" /></I></ScrollArrow>
          <ScrollThumb />
          <ScrollRest />
          <ScrollArrow aria-label="Вниз"><I w={8} h={6}><path d="M1 1l3 3 3-3" stroke="#505050" strokeWidth="2" /></I></ScrollArrow>
        </ScrollTrack>
        <ClockHolder><Clock /></ClockHolder>
      </Viewport>

      <Taskbar>
        <Apps>
          <AppButton $w={56} aria-label="Пуск"><StartArt /></AppButton>
          {apps.map(([name, Art, open]) => <AppButton key={name} $open={open} aria-label={name}><Art /></AppButton>)}
          <AppButton $open $w={54} aria-label="Блокнот"><NotepadArt /></AppButton>
          <StackEdge />
        </Apps>
        <Tray>
          <TrayButton $w={28} aria-label="Скрытые значки"><I w={8} h={5}><path d="M4 0l4 5H0z" fill="#fff" /></I></TrayButton>
          <FeatherButton aria-label="Перо"><I w={16}><path d="M1 15Q3 6 15 1q-1 8-9 11-2 0-5 3z" fill="#a05cc8" /><path d="M1 15Q7 9 14 2" stroke="#ecd0fb" /></I></FeatherButton>
          <TrayButton aria-label="Сеть"><I><path d="M5 3h10v8H5z" stroke="#fff" /><path d="M10 11v3M7 14.500h6" stroke="#fff" /><path d="M1 1h4v4H1zM3 5v8h3" stroke="#fff" /></I></TrayButton>
          <TrayButton aria-label="Звук"><I><path d="M1 5h2l4-4v13l-4-4H1z" fill="#fff" /><circle cx="11" cy="11" r="4" fill="#fff" stroke="#d9222a" strokeWidth="2" /><path d="M8 8l6 6" stroke="#d9222a" strokeWidth="2" /></I></TrayButton>
          <TrayButton $w={44}>ENG</TrayButton>
          <DateTime>20:51<br />02.03.2016</DateTime>
        </Tray>
      </Taskbar>
    </Window>
  );
}
